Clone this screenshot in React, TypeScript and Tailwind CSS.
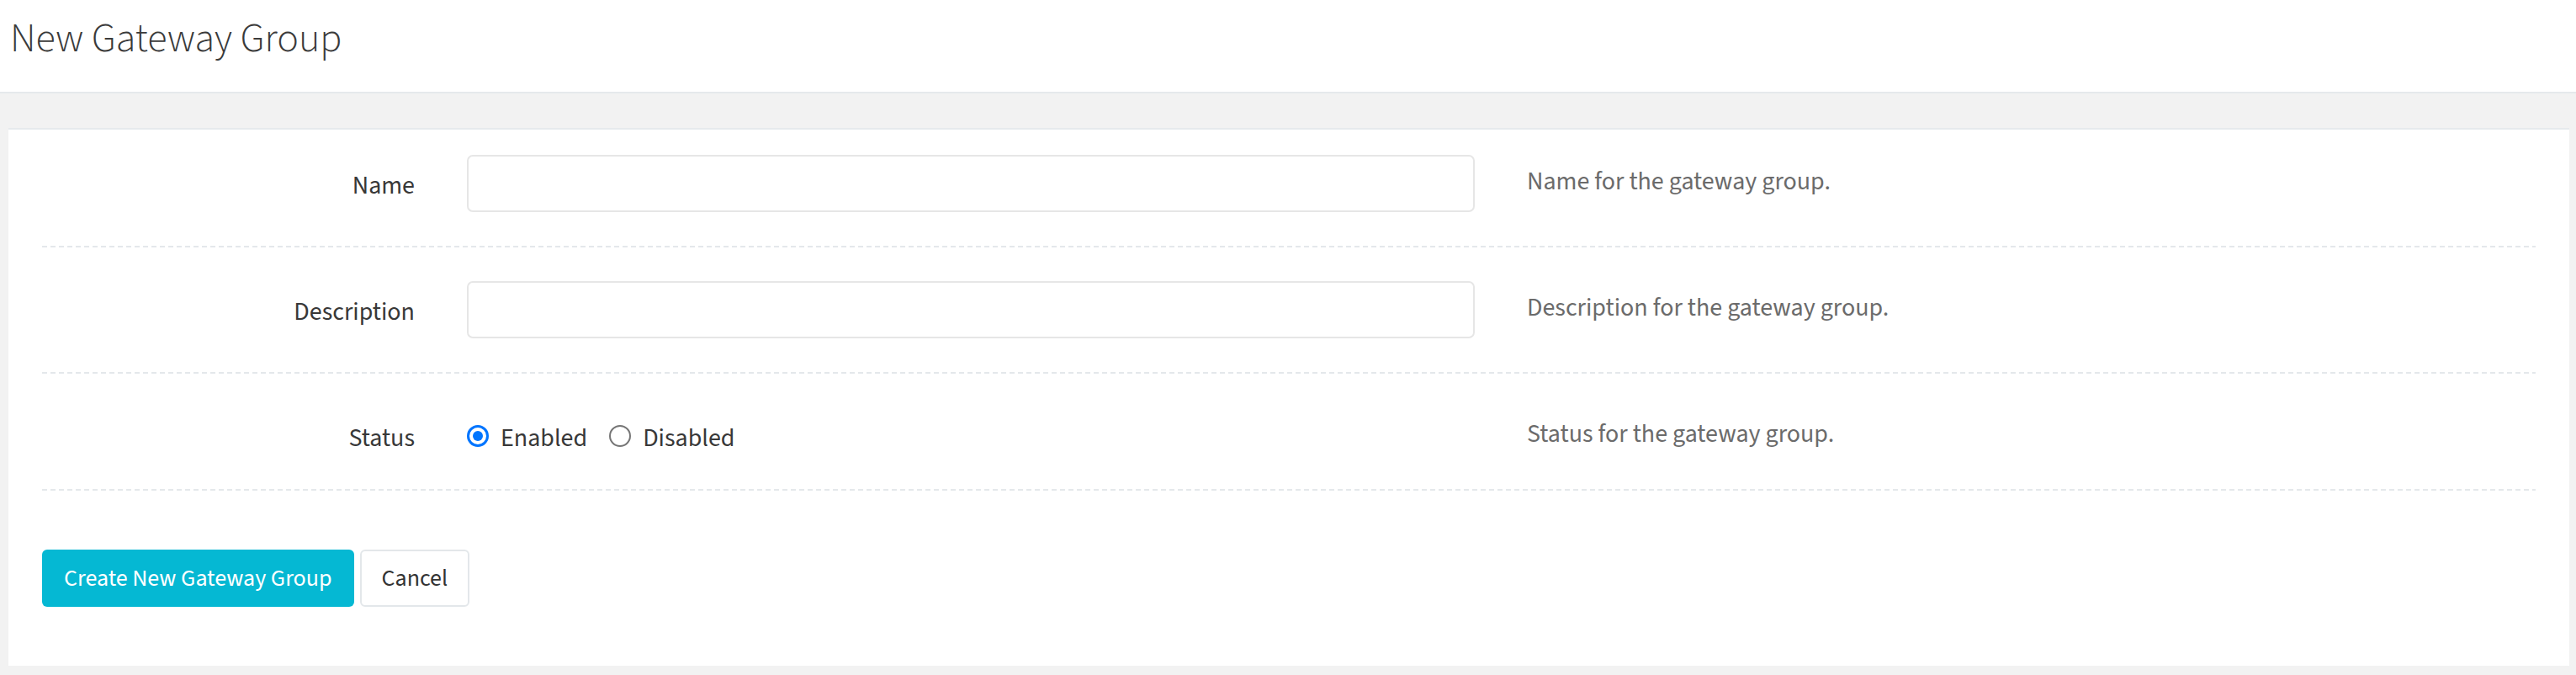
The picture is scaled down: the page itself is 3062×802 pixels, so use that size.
import React from "react";

const font = "font-['Source_Sans_3','Liberation_Sans',sans-serif]";
const dash =
  "h-[2px] bg-[linear-gradient(to_right,#e4e8eb_6px,transparent_6px)] bg-[length:10px_2px] bg-repeat-x";

function Label({ children }: { children: React.ReactNode }) {
  return (
    <div className="w-[443px] shrink-0 pt-[5px] text-right text-[30px] leading-[43px] text-[#383838]">
      {children}
    </div>
  );
}

function Help({ children }: { children: React.ReactNode }) {
  return (
    <div className="flex-1 pb-[5px] text-[30px] leading-[43px] text-[#6b6b6b]">{children}</div>
  );
}

function TextInput() {
  return (
    <input
      type="text"
      className="h-[68px] w-[1198px] shrink-0 rounded-[7px] border-2 border-[#e6e6e6] bg-white px-[24px] text-[30px] outline-none"
    />
  );
}

function Radio({ checked }: { checked?: boolean }) {
  if (checked) {
    return (
      <span className="flex h-[26px] w-[26px] shrink-0 items-center justify-center rounded-full border-[3px] border-[#0075ff] bg-white">
        <span className="h-[12px] w-[12px] rounded-full bg-[#0075ff]" />
      </span>
    );
  }
  return <span className="h-[26px] w-[26px] shrink-0 rounded-full border-2 border-[#767676] bg-white" />;
}

export default function App() {
  return (
    <div className={`${font} min-h-screen bg-[#f2f2f2] pb-[11px]`}>
      <header className="h-[111px] border-b-2 border-[#e5e9ec] bg-white pl-[12px] pt-[12px]">
        <h1 className="text-[48px] font-light leading-[68px] text-[#3a3a3a]">New Gateway Group</h1>
      </header>

      <main className="mt-[41px] ml-[10px] mr-[8px] border-t-2 border-[#e6eaed] bg-white px-[40px]">
        <div className="flex items-center gap-[62px] pt-[30px] pb-[40px]">
          <Label>Name</Label>
          <TextInput />
          <Help>Name for the gateway group.</Help>
        </div>
        <div className={dash} />

        <div className="flex items-center gap-[62px] py-[40px]">
          <Label>Description</Label>
          <TextInput />
          <Help>Description for the gateway group.</Help>
        </div>
        <div className={dash} />

        <div className="flex h-[137px] items-start gap-[62px] pt-[40px]">
          <div className="flex h-[68px] items-center gap-[62px] w-full">
            <Label>Status</Label>
            <div className="flex w-[1198px] shrink-0 items-center">
              <label className="flex items-center">
                <Radio checked />
                <span className="ml-[14px] pt-[5px] text-[30px] leading-[43px] text-[#383838]">Enabled</span>
              </label>
              <label className="ml-[26px] flex items-center">
                <Radio />
                <span className="ml-[14px] pt-[5px] text-[30px] leading-[43px] text-[#383838]">Disabled</span>
              </label>
            </div>
            <Help>Status for the gateway group.</Help>
          </div>
        </div>
        <div className={dash} />

        <div className="flex items-center py-[70px]">
          <button className="flex h-[68px] items-center rounded-[6px] bg-[#05b8d3] px-[26px] text-[28px] leading-[40px] text-white">
            Create New Gateway Group
          </button>
          <button className="ml-[7px] flex h-[68px] items-center rounded-[6px] border-2 border-[#e3e7ea] bg-white px-[24px] text-[28px] leading-[40px] text-[#333333]">
            Cancel
          </button>
        </div>
      </main>
    </div>
  );
}
